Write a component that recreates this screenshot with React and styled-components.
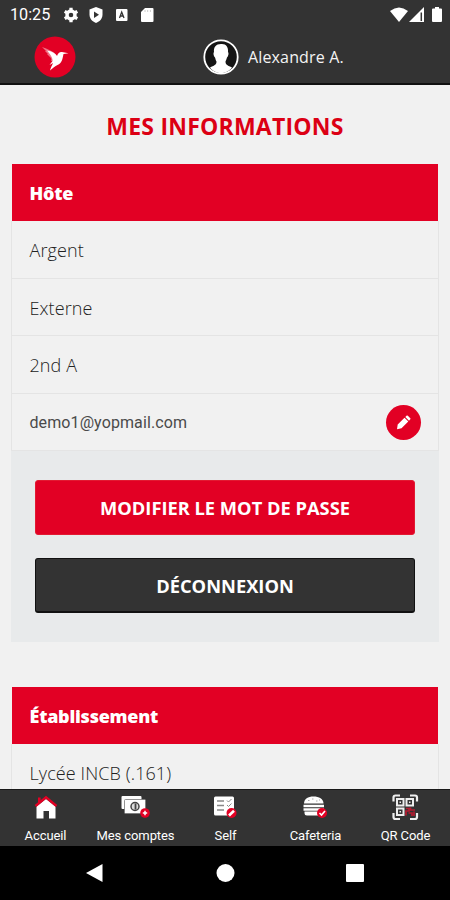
import React from 'react';
import styled, { createGlobalStyle } from 'styled-components';

const RED = '#e20024';
const DARK = '#333333';

const GlobalStyle = createGlobalStyle`
  * {
    box-sizing: border-box;
  }

  body {
    margin: 0;
    background: #f1f1f1;
    font-family: 'Open Sans', sans-serif;
  }
`

const Screen = styled.div`
  display: flex;
  flex-direction: column;
  width: 450px;
  height: 900px;
  overflow: hidden;
  background: #f1f1f1;
`

const StatusBar = styled.div`
  display: flex;
  align-items: center;
  justify-content: space-between;
  flex: none;
  height: 30px;
  padding: 0 5px 0 10px;
  background: ${DARK};
  color: #fff;
`

const StatusGroup = styled.div`
  display: flex;
  align-items: center;
  height: 30px;
`

const Clock = styled.span`
  width: 52.500px;
  font-family: Roboto, sans-serif;
  font-size: 16.200px;
  line-height: 30px;
`

const StatusIcon = styled.svg`
  display: block;
  width: ${({ $width }) => $width || 16}px;
  height: 16px;
  margin-right: ${({ $gap }) => $gap || 0}px;
`

const Header = styled.header`
  display: flex;
  align-items: center;
  flex: none;
  height: 55px;
  padding: 0 34px;
  background: ${DARK};
  border-bottom: 2px solid #111;
`

const Logo = styled.svg`
  display: block;
  width: 42px;
  height: 42px;
`

const User = styled.div`
  display: flex;
  align-items: center;
  gap: 9px;
  margin-left: 127px;
  color: #f4f4f4;
  font-size: 16px;
  letter-spacing: 0.15px;
`

const Avatar = styled.svg`
  display: block;
  width: 36px;
  height: 36px;
`

const Content = styled.main`
  flex: 1;
  min-height: 0;
  overflow: hidden;
  padding: 0 11px;
`

const Title = styled.h1`
  margin: 0;
  height: 79px;
  color: #dc0014;
  font-size: 23px;
  font-weight: 700;
  letter-spacing: 0.22px;
  line-height: 82px;
  text-align: center;
`

const Card = styled.section`
  margin-bottom: 45px;
`

const CardTitle = styled.h2`
  margin: 0 1px;
  height: 57px;
  padding: 0 17.500px;
  background: ${RED};
  color: #fff;
  font-size: 18px;
  font-weight: 800;
  letter-spacing: -0.25px;
  line-height: 58px;
`

const Row = styled.div`
  display: flex;
  align-items: center;
  justify-content: space-between;
  height: 57.5px;
  padding: 2px 17px 0 17.500px;
  border: 1px solid #e4e4e4;
  border-top: 0;
  color: ${({ $roboto }) => ($roboto ? '#4a4a4a' : '#222')};
  font-family: ${({ $roboto }) => ($roboto ? 'Roboto' : "'Open Sans'")}, sans-serif;
  font-size: ${({ $roboto }) => ($roboto ? 16 : 18)}px;
  font-weight: ${({ $roboto }) => ($roboto ? 400 : 300)};
  letter-spacing: 0.1px;
`

const EditButton = styled.button`
  display: flex;
  align-items: center;
  justify-content: center;
  width: 35px;
  height: 35px;
  margin-top: -1px;
  padding: 0;
  border: 0;
  border-radius: 50%;
  background: ${RED};
`

const Actions = styled.div`
  display: flex;
  flex-direction: column;
  gap: 23px;
  height: 191px;
  padding: 29px 24px 0;
  background: #e8eaeb;
`

const Button = styled.button`
  height: 55px;
  padding: 0;
  border: 1px solid ${({ $dark }) => ($dark ? '#111' : '#e21a32')};
  border-bottom-width: ${({ $dark }) => ($dark ? 2 : 1)}px;
  border-radius: 3px;
  background: ${({ $dark }) => ($dark ? DARK : RED)};
  color: #fff;
  font-family: 'Open Sans', sans-serif;
  font-size: 18.300px;
  font-weight: 700;
`

const TabBar = styled.nav`
  display: grid;
  grid-template-columns: repeat(5, 1fr);
  flex: none;
  height: 57px;
  background: ${DARK};
  border-top: 1px solid #191919;
`

const Tab = styled.a`
  display: flex;
  flex-direction: column;
  align-items: center;
  padding: 3px 0 0 1px;
  color: #fff;
  font-family: Roboto, sans-serif;
  font-size: 13px;
  letter-spacing: -0.1px;
  line-height: 18px;
  white-space: nowrap;
`

const TabIcon = styled.svg`
  display: block;
  width: 32px;
  height: 30px;
  margin-bottom: 4px;
`

const SystemNav = styled.div`
  display: flex;
  align-items: center;
  justify-content: space-between;
  flex: none;
  height: 54px;
  padding: 0 85px;
  background: #000;
`

const NavIcon = styled.svg`
  display: block;
  width: 20px;
  height: 20px;
  fill: #fff;
`

const Hummingbird = () => (
  <Logo viewBox="0 0 42 42">
    <circle cx="21" cy="21" r="20.5" fill={RED} />
    <path d="M8 11 C13 13 20 15 23 20 L24 24 L17 25 C18 23 17 22 16 21 L13 18 L14 18 L11 15 L12 15 Z" fill="#fff" opacity=".45" />
    <path d="M13 14.500 C18 15.500 21 17 23 20 C24 17 26 15.500 28 16 L34.500 17.300 L29.500 18 C28.500 23 28 27 23.500 29 C21 30 19 32 16 34.500 C16.500 32 18 29.500 19 27 L15.500 29 L18.500 25 C19 22 16 18 13 14.500 Z" fill="#fff" />
  </Logo>
)

const UserAvatar = () => (
  <Avatar viewBox="0 0 36 36">
    <circle cx="18" cy="18" r="16.700" fill="#151515" stroke="#fff" strokeWidth="1.800" />
    <path d="M18 5 C23 4.500 25.500 8 25 13 C26 14 25.500 17 24 18.500 C23.500 20.500 22.800 21.500 22.500 22.500 C22.500 26 25 26.500 29 28.500 C26 32.500 22 34 18 34 C14 34 10 32.500 7 28.500 C11 26.500 13.500 26 13.500 22.500 C12.800 21.500 12.500 20 12 18.500 C10.500 17 10 14 11 13 C10.500 8 13 5 18 5 Z" fill="#fff" />
  </Avatar>
)

const HomeIcon = () => (
  <TabIcon viewBox="0 0 32 30">
    <path d="M6.500 13.500 L16 6 L25.500 13.500 V25.500 H19 V18 H13.500 V25.500 H6.500 Z" fill="#fff" />
    <path d="M5.500 13 L16 4.300 L26.500 13" fill="none" stroke={RED} strokeWidth="2.400" />
    <path d="M9.300 9.500 V4.500" stroke={RED} strokeWidth="2.600" />
  </TabIcon>
)

const MoneyIcon = () => (
  <TabIcon viewBox="0 0 32 30">
    <rect x="1.500" y="3" width="20" height="13" rx="1" fill="#fff" />
    <rect x="4.500" y="6.500" width="21" height="14" rx="1" fill="#fff" stroke="#777" strokeWidth=".8" />
    <circle cx="15" cy="13.500" r="4" fill="#ddd" stroke="#444" strokeWidth="1.500" />
    <path d="M15.500 10.500 V16.500" stroke="#444" strokeWidth="1.800" />
    <circle cx="25" cy="20" r="4.800" fill={RED} />
    <path d="M22.800 20 H27.200 M25 17.800 V22.200" stroke="#fff" strokeWidth="1.500" />
  </TabIcon>
)

const MenuIcon = () => (
  <TabIcon viewBox="0 0 32 30">
    <rect x="4" y="3.500" width="20" height="19" rx="1.500" fill="#fff" />
    <path d="M7 8 H14 M7 12.500 H14 M7 17 H14" stroke="#888" strokeWidth="1.300" />
    <path d="M17 7.500 L18.500 9 L21.500 6 M17 12 L18.500 13.500 L21.500 10.500" fill="none" stroke="#888" />
    <circle cx="21.500" cy="20" r="5" fill={RED} />
    <path d="M19 22.500 L24 17.800" stroke="#fff" strokeWidth="2.600" />
  </TabIcon>
)

const BurgerIcon = () => (
  <TabIcon viewBox="0 0 32 30">
    <path d="M4 10.500 C4 6 8 3.500 13.500 3.500 C19 3.500 23.500 6 23.500 10.500 Z" fill="#fff" />
    <path d="M8 7.500 H9.500 M12 6 H13.500 M16 8 H17.500 M19 7 H20" stroke="#aaa" />
    <path d="M3.500 13 H24 M3.500 16.500 H24" stroke="#fff" strokeWidth="2.400" />
    <path d="M4.500 18.500 H23.500 V20 Q23.500 22.500 21 22.500 H7 Q4.500 22.500 4.500 20 Z" fill="#fff" />
    <circle cx="22" cy="20" r="5" fill={RED} />
    <path d="M19.500 20 L21.500 22 L25 18" fill="none" stroke="#fff" strokeWidth="1.600" />
  </TabIcon>
)

const QrIcon = () => (
  <TabIcon viewBox="0 0 32 30">
    <path d="M3.500 8.500 V4.500 Q3.500 2.500 5.500 2.500 H10 M20 2.500 H25 Q27 2.500 27 4.500 V8.500 M27 20 V24 Q27 26 25 26 H20 M10 26 H5.500 Q3.500 26 3.500 24 V20" fill="none" stroke="#eee" strokeWidth="2.200" />
    <g fill="none" stroke="#eee" strokeWidth="2">
      <rect x="7" y="6" width="6.500" height="6.500" />
      <rect x="16.500" y="6" width="6.500" height="6.500" />
      <rect x="7" y="15.500" width="6.500" height="6.500" />
    </g>
    <path d="M9.500 9.200 H11 M19 9.200 H20.500 M9.500 18.700 H11" stroke="#eee" strokeWidth="1.500" />
    <path d="M16 15.500 H19 V18 H16 V22.500 M20.500 14.500 V17 H25 M18.500 20 H22 V23 M24 18.500 V23" fill="none" stroke="#b51b30" strokeWidth="1.700" />
  </TabIcon>
)

const tabs = [
  { label: 'Accueil', Icon: HomeIcon },
  { label: 'Mes comptes', Icon: MoneyIcon },
  { label: 'Self', Icon: MenuIcon },
  { label: 'Cafeteria', Icon: BurgerIcon },
  { label: 'QR Code', Icon: QrIcon },
];

const App = () => {
  return (
    <Screen>
      <GlobalStyle />
      <StatusBar>
        <StatusGroup>
          <Clock>10:25</Clock>
          <StatusIcon viewBox="0 0 16 16" $gap={9.5}>
            <circle cx="8" cy="8" r="4" fill="none" stroke="#fff" strokeWidth="3.400" />
            <path d="M8 .7 V3 M8 13 V15.300 M1.700 4.400 L3.700 5.500 M12.300 10.500 L14.300 11.600 M1.700 11.600 L3.700 10.500 M12.300 5.500 L14.300 4.400" stroke="#fff" strokeWidth="3.300" />
          </StatusIcon>
          <StatusIcon viewBox="0 0 16 16" $gap={9.5}>
            <path d="M8 0 L14.500 2.500 V7.500 C14.500 11.500 12 14.500 8 16 C4 14.500 1.500 11.500 1.500 7.500 V2.500 Z" fill="#fff" />
            <path d="M6 4.500 L11 7.800 L6 11 Z" fill={DARK} />
          </StatusIcon>
          <StatusIcon viewBox="0 0 16 16" $gap={9.5}>
            <rect x="2" y="2" width="11.500" height="12" rx="1" fill="#fff" />
            <path d="M5.500 11 L7.700 5 L10 11 M6.300 9 H9.200" fill="none" stroke={DARK} strokeWidth="1.300" />
          </StatusIcon>
          <StatusIcon viewBox="0 0 16 16">
            <path d="M6 1 H13.500 Q14.500 1 14.500 2 V14 Q14.500 15 13.500 15 H3 Q2 15 2 14 V5 Z" fill="#fff" />
            <path d="M6 3 V5 M8.700 3 V5 M11.400 3 V5" stroke="#ccc" />
          </StatusIcon>
        </StatusGroup>
        <StatusGroup>
          <StatusIcon viewBox="0 0 16 16" $width={18} $gap={1} preserveAspectRatio="none">
            <path d="M0 4 Q8 -3 16 4 L8 15 Z" fill="#fff" />
          </StatusIcon>
          <StatusIcon viewBox="0 0 16 16" $gap={4}>
            <path d="M0 15 L15 0 V15 Z" fill="#fff" />
            <path d="M12.300 5.500 V14" stroke={DARK} strokeWidth="1.500" />
          </StatusIcon>
          <StatusIcon viewBox="0 0 16 16">
            <path d="M6 0 H10 V1.500 H12 Q13 1.500 13 2.500 V14 Q13 15 12 15 H4 Q3 15 3 14 V2.500 Q3 1.500 4 1.500 H6 Z" fill="#fff" />
          </StatusIcon>
        </StatusGroup>
      </StatusBar>

      <Header>
        <Hummingbird />
        <User>
          <UserAvatar />
          <span>Alexandre A.</span>
        </User>
      </Header>

      <Content>
        <Title>MES INFORMATIONS</Title>
        <Card>
          <CardTitle>Hôte</CardTitle>
          <Row>Argent</Row>
          <Row>Externe</Row>
          <Row>2nd A</Row>
          <Row $roboto>
            <span>demo1@yopmail.com</span>
            <EditButton aria-label="Modifier">
              <svg width="17" height="17" viewBox="0 0 17 17">
                <path d="M2 15.300 L2.700 10.500 L9.500 3.700 L13.300 7.500 L6.500 14.300 Z M10.300 3 L11.800 1.600 Q12.300 1.200 12.800 1.700 L15.300 4.200 Q15.800 4.700 15.300 5.200 L14 6.700 Z" fill="#fff" />
              </svg>
            </EditButton>
          </Row>
          <Actions>
            <Button>MODIFIER LE MOT DE PASSE</Button>
            <Button $dark>DÉCONNEXION</Button>
          </Actions>
        </Card>
        <Card>
          <CardTitle>Établissement</CardTitle>
          <Row>Lycée INCB (.161)</Row>
        </Card>
      </Content>

      <TabBar>
        {tabs.map(({ label, Icon }) => (
          <Tab key={label}>
            <Icon />
            {label}
          </Tab>
        ))}
      </TabBar>

      <SystemNav>
        <NavIcon viewBox="0 0 20 20">
          <path d="M1 10 L17.500 1 V19 Z" />
        </NavIcon>
        <NavIcon viewBox="0 0 20 20">
          <circle cx="10.500" cy="10" r="9" />
        </NavIcon>
        <NavIcon viewBox="0 0 20 20">
          <rect x="1" y="1" width="18" height="18" rx="1" />
        </NavIcon>
      </SystemNav>
    </Screen>
  );
};

export default App;
